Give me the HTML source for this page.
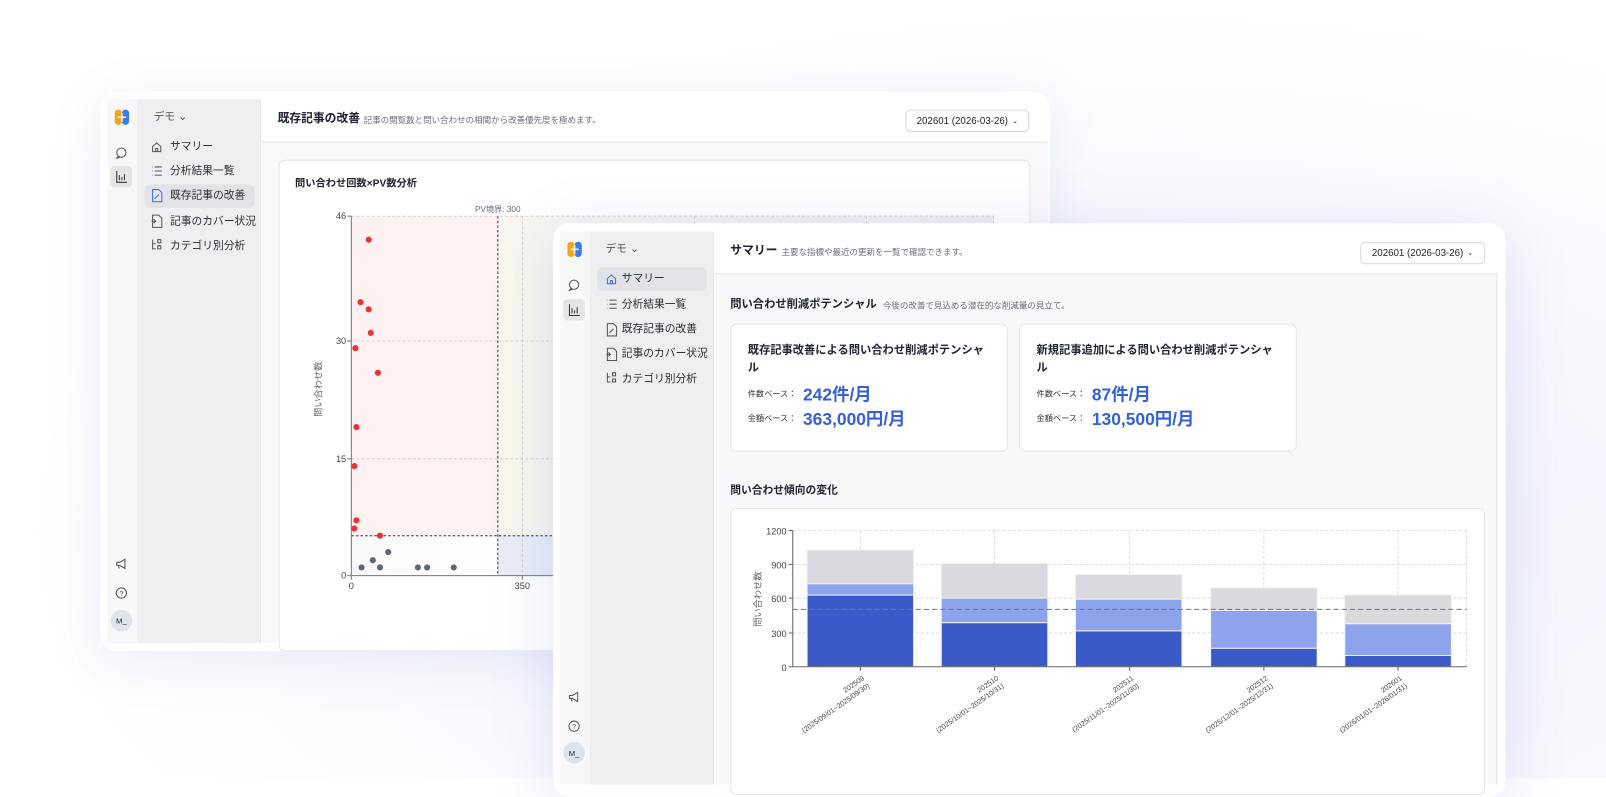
<!DOCTYPE html>
<html><head><meta charset="utf-8"><style>
*{margin:0;padding:0;box-sizing:border-box}
body{width:1606px;height:762px;overflow:hidden;background:#fff;font-family:"Liberation Sans","Noto Sans CJK JP",sans-serif;color:#1f2330}
#w{position:absolute;left:0;top:0;width:1568px;height:760px;transform:scale(1.02423);transform-origin:0 0;background:radial-gradient(ellipse at 1100px 520px,#eef0fb 0%,#f6f7fd 35%,#fff 70%)}
.a{position:absolute}
.t{position:absolute;white-space:nowrap;line-height:1}
.frame{position:absolute;background:#fff;border-radius:16px;box-shadow:0 10px 50px rgba(110,120,210,.13)}
.rail{position:absolute;background:#f8f8fa;border-right:1px solid #ececef}
.side{position:absolute;background:#efeff1;border-right:1px solid #e4e4e8}
.hl{position:absolute;background:#e2e3e7;border-radius:6px}
.it{position:absolute;font-size:10.5px;color:#2a2d36;white-space:nowrap;line-height:1}
.dd{position:absolute;border:1px solid #d6d7dc;border-radius:5px;background:#fff;font-size:9.5px;color:#22252e;display:flex;align-items:center;justify-content:center}
.card{position:absolute;background:#fff;border:1px solid #e3e4e8;border-radius:6px}
.lbl{font-size:8px;color:#333}
.val{font-size:17px;font-weight:bold;color:#3461d8}
</style></head><body><div id="w">

<!-- BACK WINDOW -->
<div class="frame" style="left:98px;top:90px;width:927px;height:546px"></div>
<div class="rail" style="left:105px;top:97px;width:30px;height:531px"></div>
<div class="side" style="left:135px;top:97px;width:120px;height:531px"></div>
<div class="a" style="left:255px;top:97px;width:768px;height:531px;background:#f9f9fb"></div>
<div class="a" style="left:255px;top:97px;width:768px;height:42px;background:#fff;border-bottom:1px solid #e3e4e8"></div>
<svg class="a" style="left:105px;top:97px" width="30" height="531">
 <rect x="7" y="10" width="7" height="15" rx="3.5" fill="#f7a21b"/><rect x="14" y="10" width="7" height="15" rx="3.5" fill="#3d7be8"/><path d="M14 13v9M10 17.5h8" stroke="#fff" stroke-width="1.5"/>
 <circle cx="13.5" cy="52" r="4.5" fill="none" stroke="#555" stroke-width="1"/><path d="M10.5 55.5l-1.5 2 3-1" fill="none" stroke="#555" stroke-width="1"/>
 <rect x="3" y="65" width="21" height="21" rx="4" fill="#e4e5e9"/><path d="M9 70v11h10M11.5 74v5M14 76v3M16.5 73v6" stroke="#333" stroke-width="1" fill="none"/>
 <path d="M9 452h3l5-3v9l-5-3h-3zM10.5 455l1 3" stroke="#555" stroke-width="1" fill="none"/>
 <circle cx="13.5" cy="482" r="5" fill="none" stroke="#555" stroke-width="1"/><text x="13.5" y="485" font-size="7" text-anchor="middle" fill="#555">?</text>
 <circle cx="13.5" cy="509" r="10.5" fill="#dfe3ea"/><text x="13.5" y="512" font-size="7.5" text-anchor="middle" fill="#222">M_</text>
</svg>
<div class="t" style="left:150px;top:109px;font-size:10.5px;color:#555">デモ ⌄</div>
<div class="hl" style="left:141px;top:180px;width:108px;height:23px"></div>
<svg class="a" style="left:145px;top:130px" width="16" height="120" fill="none" stroke="#555" stroke-width="1">
 <path d="M4 18v-5l4-3.5 4 3.5v5zM7 18v-3h2v3"/>
 <path d="M6 33h7M6 37h7M6 41h7M3.5 33h.5M3.5 37h.5M3.5 41h.5"/>
 <path d="M4 55h6l3 3v9H4zM6 64l4-4" stroke="#3d6be0"/>
 <path d="M4 80h6l3 3v9H4zM3 86h4M5 84l2 2-2 2"/>
 <path d="M4 104v9h3M4 108h3M9 104h3v3h-3zM9 110h3v3h-3z"/>
</svg>
<div class="it" style="left:166px;top:138px">サマリー</div>
<div class="it" style="left:166px;top:162px">分析結果一覧</div>
<div class="it" style="left:166px;top:186px">既存記事の改善</div>
<div class="it" style="left:166px;top:211px">記事のカバー状況</div>
<div class="it" style="left:166px;top:235px">カテゴリ別分析</div>
<div class="t" style="left:271px;top:111px;font-size:11.5px;font-weight:bold">既存記事の改善</div>
<div class="t" style="left:355px;top:113px;font-size:8.3px;color:#6b6f7a">記事の閲覧数と問い合わせの相関から改善優先度を極めます。</div>
<div class="dd" style="left:884px;top:107px;width:121px;height:22px">202601 (2026-03-26) <span style="font-size:7px;margin-left:4px">⌄</span></div>
<div class="card" style="left:272px;top:156px;width:734px;height:480px"></div>
<div class="t" style="left:288px;top:175px;font-size:10px;font-weight:bold">問い合わせ回数×PV数分析</div>
<svg class="a" style="left:0;top:0" width="1030" height="640" font-family="Liberation Sans, Noto Sans CJK JP, sans-serif">
 <defs><linearGradient id="g1" x1="0" x2="1"><stop offset="0" stop-color="#f8f7ee"/><stop offset="1" stop-color="#eeeff3"/></linearGradient>
 <linearGradient id="g2" x1="0" x2="1"><stop offset="0" stop-color="#f9f9fa"/><stop offset="1" stop-color="#fff"/></linearGradient></defs>
 <rect x="343" y="211" width="143" height="312" fill="#fdf1f1"/>
 <rect x="486" y="211" width="484" height="312" fill="url(#g1)"/>
 <rect x="343" y="523" width="143" height="39" fill="url(#g2)"/>
 <rect x="486" y="523" width="484" height="39" fill="#e8edf5"/>
 <g stroke="#c8c8cc" stroke-width=".7" stroke-dasharray="3 2" fill="none">
  <path d="M343 211H970M343 333H970M343 448H970M510 211V562M678 211V562M846 211V562M970 211V562"/></g>
 <path d="M486 211V562M343 523H970" stroke="#5d6882" stroke-width="1.3" stroke-dasharray="2.5 2" fill="none"/>
 <path d="M343 211V562H970M339 211h4M339 333h4M339 448h4M339 562h4M343 562v4M510 562v4" stroke="#777" stroke-width="1" fill="none"/>
 <text x="486" y="207" font-size="8" fill="#5a6b8a" text-anchor="middle">PV境界: 300</text>
 <g font-size="9" fill="#444" text-anchor="end"><text x="338" y="214">46</text><text x="338" y="336">30</text><text x="338" y="451">15</text><text x="338" y="565">0</text></g>
 <g font-size="9" fill="#444" text-anchor="middle"><text x="343" y="575">0</text><text x="510" y="575">350</text></g>
 <text transform="translate(314 380) rotate(-90)" font-size="9" fill="#666" text-anchor="middle">問い合わせ数</text>
 <g fill="#e83338"><circle cx="360" cy="234" r="3"/><circle cx="352" cy="295" r="3"/><circle cx="360" cy="302" r="3"/><circle cx="362" cy="325" r="3"/><circle cx="347" cy="340" r="3"/><circle cx="369" cy="364" r="3"/><circle cx="348" cy="417" r="3"/><circle cx="346" cy="455" r="3"/><circle cx="348" cy="508" r="3"/><circle cx="346" cy="516" r="3"/><circle cx="371" cy="523" r="3"/></g>
 <g fill="#5e6677"><circle cx="353" cy="554" r="3"/><circle cx="364" cy="547" r="3"/><circle cx="371" cy="554" r="3"/><circle cx="379" cy="539" r="3"/><circle cx="408" cy="554" r="3"/><circle cx="417" cy="554" r="3"/><circle cx="443" cy="554" r="3"/></g>
</svg>

<!-- FRONT WINDOW -->
<div class="frame" style="left:540px;top:218px;width:930px;height:560px;box-shadow:0 10px 60px rgba(100,110,220,.18)"></div>
<div class="rail" style="left:547px;top:226px;width:30px;height:540px"></div>
<div class="side" style="left:577px;top:226px;width:120px;height:540px"></div>
<div class="a" style="left:697px;top:226px;width:765px;height:540px;background:#f8f8fa;border-right:1px solid #e3e4e8"></div>
<div class="a" style="left:697px;top:226px;width:765px;height:42px;background:#fff;border-bottom:1px solid #e3e4e8"></div>
<svg class="a" style="left:547px;top:226px" width="30" height="536">
 <rect x="7" y="10" width="7" height="15" rx="3.5" fill="#f7a21b"/><rect x="14" y="10" width="7" height="15" rx="3.5" fill="#3d7be8"/><path d="M14 13v9M10 17.5h8" stroke="#fff" stroke-width="1.5"/>
 <circle cx="13.5" cy="52" r="4.5" fill="none" stroke="#555" stroke-width="1"/><path d="M10.5 55.5l-1.5 2 3-1" fill="none" stroke="#555" stroke-width="1"/>
 <rect x="3" y="66" width="21" height="21" rx="4" fill="#e4e5e9"/><path d="M9 71v11h10M11.5 75v5M14 77v3M16.5 74v6" stroke="#333" stroke-width="1" fill="none"/>
 <path d="M9 453h3l5-3v9l-5-3h-3zM10.5 456l1 3" stroke="#555" stroke-width="1" fill="none"/>
 <circle cx="13.5" cy="483" r="5" fill="none" stroke="#555" stroke-width="1"/><text x="13.5" y="486" font-size="7" text-anchor="middle" fill="#555">?</text>
 <circle cx="13.5" cy="509" r="10.5" fill="#dfe3ea"/><text x="13.5" y="512" font-size="7.5" text-anchor="middle" fill="#222">M_</text>
</svg>
<div class="t" style="left:591px;top:238px;font-size:10.5px;color:#555">デモ ⌄</div>
<div class="hl" style="left:583px;top:261px;width:107px;height:23px"></div>
<svg class="a" style="left:589px;top:259px" width="16" height="122" fill="none" stroke="#555" stroke-width="1">
 <path d="M4 18v-5l4-3.5 4 3.5v5zM7 18v-3h2v3" stroke="#3d6be0"/>
 <path d="M6 34h7M6 38h7M6 42h7M3.5 34h.5M3.5 38h.5M3.5 42h.5"/>
 <path d="M4 57h6l3 3v9H4zM6 66l4-4"/>
 <path d="M4 81h6l3 3v9H4zM3 87h4M5 85l2 2-2 2"/>
 <path d="M4 105v9h3M4 109h3M9 105h3v3h-3zM9 111h3v3h-3z"/>
</svg>
<div class="it" style="left:607px;top:267px">サマリー</div>
<div class="it" style="left:607px;top:292px">分析結果一覧</div>
<div class="it" style="left:607px;top:316px">既存記事の改善</div>
<div class="it" style="left:607px;top:340px">記事のカバー状況</div>
<div class="it" style="left:607px;top:365px">カテゴリ別分析</div>
<div class="t" style="left:713px;top:240px;font-size:11.5px;font-weight:bold">サマリー</div>
<div class="t" style="left:763px;top:242px;font-size:8.3px;color:#6b6f7a">主要な指標や最近の更新を一覧で確認できます。</div>
<div class="dd" style="left:1328px;top:236px;width:122px;height:22px">202601 (2026-03-26) <span style="font-size:7px;margin-left:4px">⌄</span></div>
<div class="t" style="left:713px;top:292px;font-size:11px;font-weight:bold">問い合わせ削減ポテンシャル</div>
<div class="t" style="left:862px;top:294px;font-size:8.3px;color:#6b6f7a">今後の改善で見込める潜在的な削減量の見立て。</div>
<div class="card" style="left:713px;top:316px;width:271px;height:125px"></div>
<div class="card" style="left:995px;top:316px;width:271px;height:125px"></div>
<div class="t" style="left:730px;top:334px;font-size:11px;font-weight:bold;line-height:17px;white-space:normal;width:240px">既存記事改善による問い合わせ削減ポテンシャル</div>
<div class="t" style="left:1012px;top:334px;font-size:11px;font-weight:bold;line-height:17px;white-space:normal;width:240px">新規記事追加による問い合わせ削減ポテンシャル</div>
<div class="t lbl" style="left:730px;top:381px">件数ベース：</div><div class="t val" style="left:784px;top:377px">242件/月</div>
<div class="t lbl" style="left:730px;top:405px">金額ベース：</div><div class="t val" style="left:784px;top:401px">363,000円/月</div>
<div class="t lbl" style="left:1012px;top:381px">件数ベース：</div><div class="t val" style="left:1066px;top:377px">87件/月</div>
<div class="t lbl" style="left:1012px;top:405px">金額ベース：</div><div class="t val" style="left:1066px;top:401px">130,500円/月</div>
<div class="t" style="left:713px;top:474px;font-size:10.5px;font-weight:bold">問い合わせ傾向の変化</div>
<div class="card" style="left:713px;top:496px;width:737px;height:280px"></div>
<svg class="a" style="left:0;top:0" width="1568" height="760" font-family="Liberation Sans, Noto Sans CJK JP, sans-serif">
 <g stroke="#cfcfd3" stroke-width=".7" stroke-dasharray="3 2" fill="none">
  <path d="M774 518H1432M774 551H1432M774 584H1432M774 618H1432M840 518V651M971 518V651M1103 518V651M1234 518V651M1365 518V651M1432 518V651"/></g>
 <g stroke="#f0f0f2" stroke-width="1">
 <rect x="788" y="537" width="104" height="33" fill="#d9d9de"/><rect x="788" y="570" width="104" height="11" fill="#8da4ec"/><rect x="788" y="581" width="104" height="70" fill="#3a5bc7"/>
 <rect x="919" y="550" width="104" height="34" fill="#d9d9de"/><rect x="919" y="584" width="104" height="24" fill="#8da4ec"/><rect x="919" y="608" width="104" height="43" fill="#3a5bc7"/>
 <rect x="1050" y="561" width="104" height="24" fill="#d9d9de"/><rect x="1050" y="585" width="104" height="31" fill="#8da4ec"/><rect x="1050" y="616" width="104" height="35" fill="#3a5bc7"/>
 <rect x="1182" y="574" width="104" height="22" fill="#d9d9de"/><rect x="1182" y="596" width="104" height="37" fill="#8da4ec"/><rect x="1182" y="633" width="104" height="18" fill="#3a5bc7"/>
 <rect x="1313" y="581" width="104" height="28" fill="#d9d9de"/><rect x="1313" y="609" width="104" height="31" fill="#8da4ec"/><rect x="1313" y="640" width="104" height="11" fill="#3a5bc7"/>
 </g>
 <path d="M774 595H1432" stroke="#6d7488" stroke-width="1" stroke-dasharray="5 3" fill="none"/>
 <path d="M774 518V651H1432M770 518h4M770 551h4M770 584h4M770 618h4M770 651h4M840 651v4M971 651v4M1103 651v4M1234 651v4M1365 651v4" stroke="#666" stroke-width="1" fill="none"/>
 <g font-size="9" fill="#444" text-anchor="end"><text x="768" y="522">1200</text><text x="768" y="555">900</text><text x="768" y="588">600</text><text x="768" y="622">300</text><text x="768" y="655">0</text></g>
 <text transform="translate(743 585) rotate(-90)" font-size="9" fill="#666" text-anchor="middle">問い合わせ数</text>
 <g font-size="7" fill="#444" text-anchor="end">
  <g transform="translate(842 660) rotate(-35)"><text x="0" y="4">202509</text><text x="0" y="13">(2025/09/01~2025/09/30)</text></g>
  <g transform="translate(973 660) rotate(-35)"><text x="0" y="4">202510</text><text x="0" y="13">(2025/10/01~2025/10/31)</text></g>
  <g transform="translate(1105 660) rotate(-35)"><text x="0" y="4">202511</text><text x="0" y="13">(2025/11/01~2025/11/30)</text></g>
  <g transform="translate(1236 660) rotate(-35)"><text x="0" y="4">202512</text><text x="0" y="13">(2025/12/01~2025/12/31)</text></g>
  <g transform="translate(1367 660) rotate(-35)"><text x="0" y="4">202601</text><text x="0" y="13">(2026/01/01~2026/01/31)</text></g>
 </g>
</svg>
</div></body></html>
